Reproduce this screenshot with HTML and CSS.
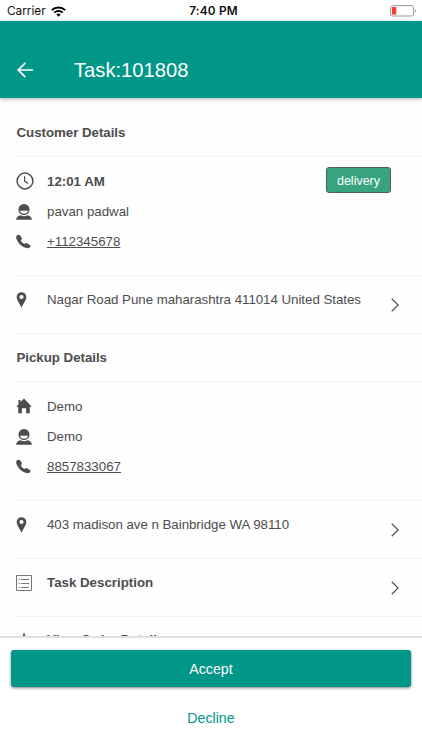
FILE: index.html
```html
<!DOCTYPE html>
<html lang="en">
<head>
<meta charset="utf-8">
<meta name="viewport" content="width=device-width, initial-scale=1">
<title>Task:101808</title>
<link rel="stylesheet" href="styles.css">
</head>
<body>
<svg width="0" height="0" class="defs" aria-hidden="true">
  <symbol id="person" viewBox="0 0 16 16">
    <path fill-rule="evenodd" d="M8 0a5.500 5.500 0 0 1 5.500 5.400c0 3.200-2.300 5.500-5.500 5.500S2.500 8.600 2.500 5.400A5.500 5.500 0 0 1 8 0ZM3.900 6.800c.5 1.900 2 3 4.100 3s3.600-1.100 4.100-3Z"/>
    <path d="M.1 15.800c.1-2.700 2-4 4.500-4.500 1.900 1.300 4.900 1.300 6.800 0 2.500.5 4.400 1.800 4.500 4.500Z"/>
  </symbol>
  <symbol id="phone" viewBox="0 0 16 16">
    <path d="M1.100 1.400C2 .5 3.300.4 4.200 1.300l1.700 2.500c.5.800.4 1.600-.2 2.300l-.6.800c.8 1.600 2.100 2.900 3.900 3.800l.9-.6c.8-.6 1.500-.6 2.200-.1l2.700 1.700c.9.700.9 1.500.1 2.300-1.100 1.200-2.700 1.400-4.500.7C5.800 13.200 2.100 9.400.5 5.200-.1 3.500.1 2.300 1.100 1.400Z"/>
  </symbol>
  <symbol id="pin" viewBox="0 0 10 16">
    <path fill-rule="evenodd" d="M5 .2A4.800 4.800 0 0 1 9.800 5C9.800 8.600 6.600 11.500 5 15.700 3.400 11.500.2 8.600.2 5A4.800 4.800 0 0 1 5 .2ZM5 2.900a2.100 2.100 0 1 0 0 4.200A2.100 2.100 0 0 0 5 2.900Z"/>
  </symbol>
  <symbol id="chevron" viewBox="0 0 8 14">
    <path d="M.7.700 7.200 7 .7 13.300" fill="none" stroke="#4d4d4d" stroke-width="1.200"/>
  </symbol>
</svg>
<div class="screen">
  <div class="status">
    <div class="carrier"><span>Carrier</span>
      <svg width="15" height="11" viewBox="0 0 15 11" fill="none" stroke="#000" stroke-width="1.900"><path d="M.8 4.200a9.500 9.500 0 0 1 13.400 0M3.200 6.700a6.100 6.100 0 0 1 8.600 0"/><path d="M5.300 8.500a3.100 3.100 0 0 1 4.400 0L7.500 10.800Z" fill="#000" stroke="none"/></svg>
    </div>
    <div class="time">7:40 PM</div>
    <svg class="battery" width="27" height="12" viewBox="0 0 27 12"><rect x=".6" y=".6" width="23" height="10.400" rx="2" fill="#fff" stroke="#999"/><rect x="2" y="2" width="4.300" height="7.600" fill="#fa3c30"/><path d="M25 4c1.300.5 1.300 3.100 0 3.600Z" fill="#999"/></svg>
  </div>
  <header class="toolbar">
    <svg width="16" height="16" viewBox="0 0 16 16" fill="none" stroke="#fff" stroke-width="1.700"><path d="M16 8H1.400M8.400.8 1.200 8l7.200 7.200"/></svg>
    <h1>Task:101808</h1>
  </header>
  <main class="content">
    <h2>Customer Details</h2>
    <section class="details">
      <div class="line"><svg class="outline" width="18" height="18" viewBox="0 0 18 18"><circle cx="9" cy="9" r="7.900" stroke-width="1.500"/><path d="M8.600 4.200v5.100l3.700 2.200" stroke-width="1.200"/></svg><b>12:01 AM</b><span class="badge">delivery</span></div>
      <div class="line"><svg width="16" height="16"><use href="#person"/></svg><span>pavan padwal</span></div>
      <div class="line"><svg width="15" height="15"><use href="#phone"/></svg><a>+112345678</a></div>
    </section>
    <section class="row"><svg class="pin" width="11" height="16"><use href="#pin"/></svg><span class="address">Nagar Road Pune maharashtra 411014 United States</span><svg class="chev" width="8" height="14"><use href="#chevron"/></svg></section>
    <h2>Pickup Details</h2>
    <section class="details">
      <div class="line"><svg width="16" height="16" viewBox="0 0 16 16"><path d="M8 .5 15.800 8.700h-2V15.300H10.100V10.200H5.900v5.100H2.200V8.700H.2L2.500 6.200V2H4.600v2Z"/></svg><span>Demo</span></div>
      <div class="line"><svg width="16" height="16"><use href="#person"/></svg><span>Demo</span></div>
      <div class="line"><svg width="15" height="15"><use href="#phone"/></svg><a>8857833067</a></div>
    </section>
    <section class="row"><svg class="pin" width="11" height="16"><use href="#pin"/></svg><span class="address">403 madison ave n Bainbridge WA 98110</span><svg class="chev" width="8" height="14"><use href="#chevron"/></svg></section>
    <section class="row"><svg class="outline list" width="16" height="16" viewBox="0 0 16 16"><path d="M.5.500h15v15H.5ZM5 4.500h8M5 8.500h8M5 12.500h8"/><path d="M2.500 4.500h1.300M2.500 8.500h1.300M2.500 12.500h1.300"/></svg><b>Task Description</b><svg class="chev" width="8" height="14"><use href="#chevron"/></svg></section>
    <section class="row order"><svg width="16" height="16" viewBox="0 0 16 16"><path d="m8 .2 2 5.200 5.500.4-4.200 3.500 1.300 5.400L8 12.200 3.400 15l1.300-5.400L.5 6.100 6 5.700Z"/></svg><b>View Order Details</b></section>
  </main>
  <footer class="actions">
    <button class="accept">Accept</button>
    <button class="decline">Decline</button>
  </footer>
</div>
</body>
</html>
```
FILE: styles.css
```css
* { box-sizing: border-box; }
body { margin: 0; background: #fff; color: #4d4d4d; font: 13.3px "Liberation Sans", Arial, sans-serif; }
.defs { display: none; }
.screen { display: flex; flex-direction: column; width: 422px; height: 750px; overflow: hidden; background: #fefefe; }
.status { display: grid; grid-template-columns: 1fr auto 1fr; align-items: center; height: 21px; padding: 1px 5px 0 7px; background: #fff; color: #111; font: 11.8px Inter, sans-serif; flex: none; }
.carrier { display: flex; align-items: center; gap: 5px; }
.time { margin-left: 3px; font-weight: 600; letter-spacing: .2px; }
.battery { justify-self: end; }
.toolbar { display: flex; align-items: center; flex: none; height: 77px; padding: 20px 17px 0; background: #009688; color: #fff; box-shadow: 0 1px 4px rgba(0,0,0,.3); z-index: 1; }
h1 { margin: 1px 0 0 41px; font-size: 20.2px; font-weight: 400; }
.content { flex: 1; min-height: 0; overflow: hidden; padding: 11px 0 0 16px; }
.content svg { fill: #4d4d4d; flex: none; }
.content .outline { fill: none; stroke: #4d4d4d; }
.content .list { stroke: #777; }
.content h2 { margin: 0; height: 48px; padding-left: 0.5px; line-height: 48px; font-size: 13.3px; letter-spacing: -.03px; border-bottom: 1px solid #f3f3f3; }
.details { height: 119px; padding-top: 9px; border-bottom: 1px solid #f3f3f3; }
.line { display: grid; grid-template-columns: 31px 1fr auto; align-items: center; height: 30.400px; padding-right: 31px; }
.line > svg { justify-self: start; }
.line > :nth-child(2) { justify-self: start; }
.badge { width: 65px; height: 26px; margin-top: -2px; border: 1px solid #4c5f57; border-radius: 3px; background: #38a37f; color: #fff; font-size: 12.5px; line-height: 26px; text-align: center; }
a { text-decoration: underline; }
.row { display: grid; grid-template-columns: 31px 1fr auto; align-items: start; height: 58px; padding: 16px 23px 0 0; line-height: 16px; border-bottom: 1px solid #f3f3f3; }
.address { letter-spacing: -.03px; }
.row .chev { margin-top: 6px; }
.row.order { padding-top: 15px; }
.actions { display: flex; flex-direction: column; flex: none; height: 114px; padding: 12px 11px 0; border-top: 2px solid #e0e0e0; background: #fff; z-index: 1; }
button { font: 14.2px "Liberation Sans", Arial, sans-serif; border: 0; padding: 0; }
.accept { height: 37px; border-radius: 3px; background: #009688; color: #fff; box-shadow: 0 1px 3px rgba(0,0,0,.5); }
.decline { height: 35px; margin-top: 13px; background: transparent; color: #009688; }
```
